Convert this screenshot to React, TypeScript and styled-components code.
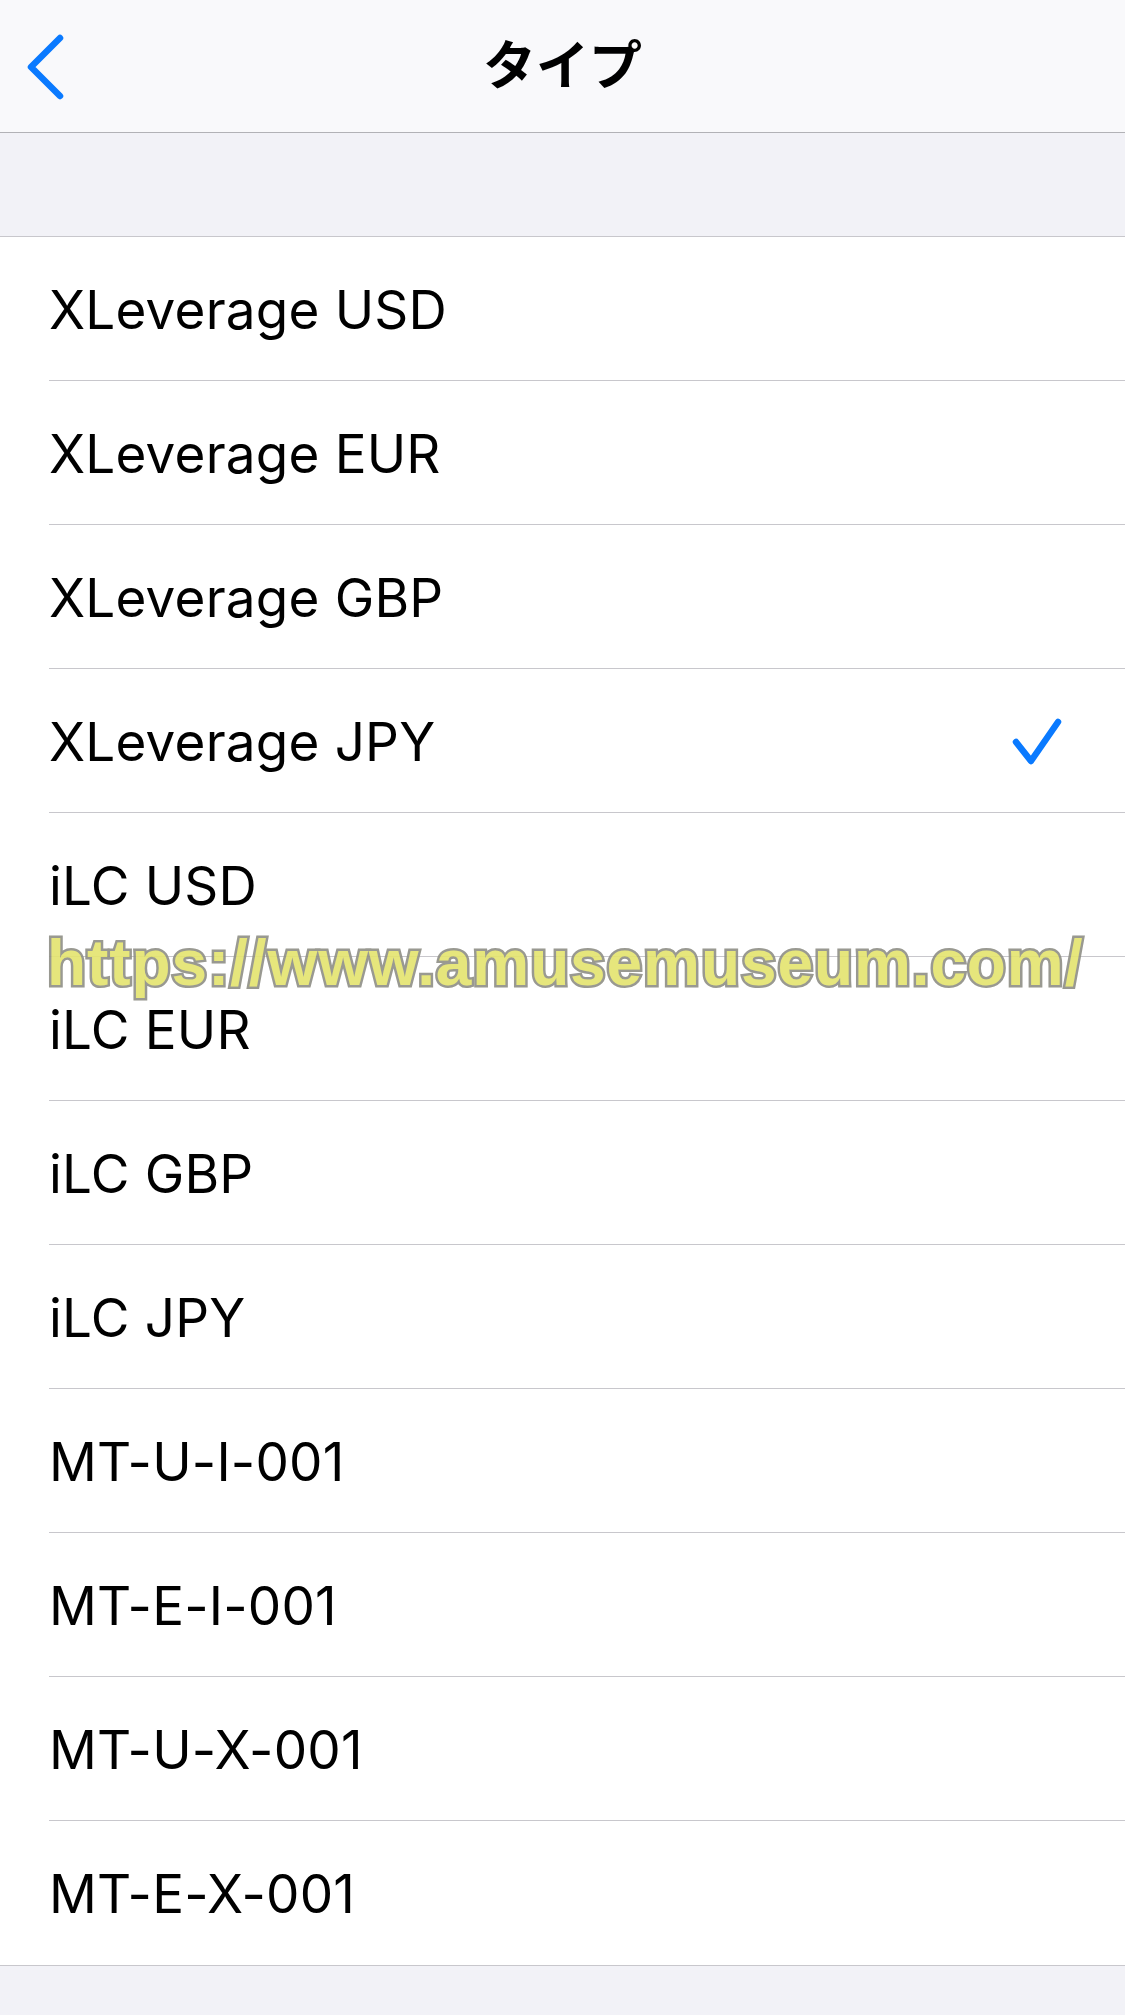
import * as React from 'react'
import styled, {createGlobalStyle} from "styled-components";

const colors = {
    blue: '#0a7aff',
    navBg: '#f9f9fb',
    groupBg: '#f2f2f7',
    navLine: '#b2b2b6',
    separator: '#c8c7cc',
    text: '#000000',
}

const GlobalStyle = createGlobalStyle`
  html, body {
    margin: 0;
    padding: 0;
    background: ${colors.groupBg};
  }
  body {
    font-family: Inter, "Noto Sans CJK JP", sans-serif;
  }
`

const Screen = styled.div`
  position: relative;
  width: 1125px;
  height: 2015px;
  background-color: ${colors.groupBg};
  display: flex;
  flex-direction: column;
  overflow: hidden;
`

const NavBar = styled.div`
  height: 132px;
  background-color: ${colors.navBg};
  border-bottom: 1px solid ${colors.navLine};
  display: grid;
  grid-template-columns: 200px 1fr 200px;
  align-items: center;
`

const BackButton = styled.div`
  padding-left: 26px;
  padding-top: 2px;
  display: flex;
  align-items: center;
`

const Title = styled.h1`
  margin: 0;
  text-align: center;
  font-family: "Noto Sans CJK JP", sans-serif;
  font-weight: 700;
  font-size: 53px;
  line-height: 1;
  color: ${colors.text};
  padding-bottom: 8px;
`

const Spacer = styled.div`
  height: 103px;
  border-bottom: 1px solid ${colors.separator};
`

const List = styled.ul`
  margin: 0;
  padding: 0;
  list-style: none;
  background-color: #ffffff;
  border-bottom: 1px solid ${colors.separator};
`

const Row = styled.li<{ $last?: boolean }>`
  height: 144px;
  margin-left: 49px;
  padding-right: 62px;
  box-sizing: border-box;
  display: flex;
  align-items: center;
  justify-content: space-between;
  border-bottom: ${p => p.$last ? 'none' : `1px solid ${colors.separator}`};
`

const Label = styled.span`
  font-family: Inter, sans-serif;
  font-size: 53px;
  letter-spacing: 0.2px;
  color: ${colors.text};
  padding-top: 2px;
`

const Watermark = styled.div`
  position: absolute;
  left: 47px;
  top: 926px;
  font-family: "Liberation Sans", Arial, sans-serif;
  font-weight: 700;
  font-size: 64px;
  letter-spacing: 0.9px;
  color: #e4e46e;
  -webkit-text-stroke: 5px #8f8f86;
  paint-order: stroke fill;
  white-space: nowrap;
  opacity: 0.9;
  pointer-events: none;
`

const items = [
    'XLeverage USD',
    'XLeverage EUR',
    'XLeverage GBP',
    'XLeverage JPY',
    'iLC USD',
    'iLC EUR',
    'iLC GBP',
    'iLC JPY',
    'MT-U-I-001',
    'MT-E-I-001',
    'MT-U-X-001',
    'MT-E-X-001',
]

const selected = 'XLeverage JPY'

const Chevron = () => (
    <svg width="40" height="70" viewBox="0 0 40 70">
        <path d="M34 6 L5 35 L34 64" fill="none" stroke={colors.blue} strokeWidth="6.5"
              strokeLinecap="round" strokeLinejoin="round"/>
    </svg>
)

const Check = () => (
    <svg width="53" height="53" viewBox="0 0 53 53">
        <path d="M6 28 L21 47 L48 8" fill="none" stroke={colors.blue} strokeWidth="6.5"
              strokeLinecap="round" strokeLinejoin="round"/>
    </svg>
)

export default function App() {
    return <Screen>
        <GlobalStyle/>
        <NavBar>
            <BackButton><Chevron/></BackButton>
            <Title>タイプ</Title>
            <div/>
        </NavBar>
        <Spacer/>
        <List>
            {items.map((item, i) => (
                <Row key={item} $last={i === items.length - 1}>
                    <Label>{item}</Label>
                    {item === selected && <Check/>}
                </Row>
            ))}
        </List>
        <Watermark>https://www.amusemuseum.com/</Watermark>
    </Screen>
}
